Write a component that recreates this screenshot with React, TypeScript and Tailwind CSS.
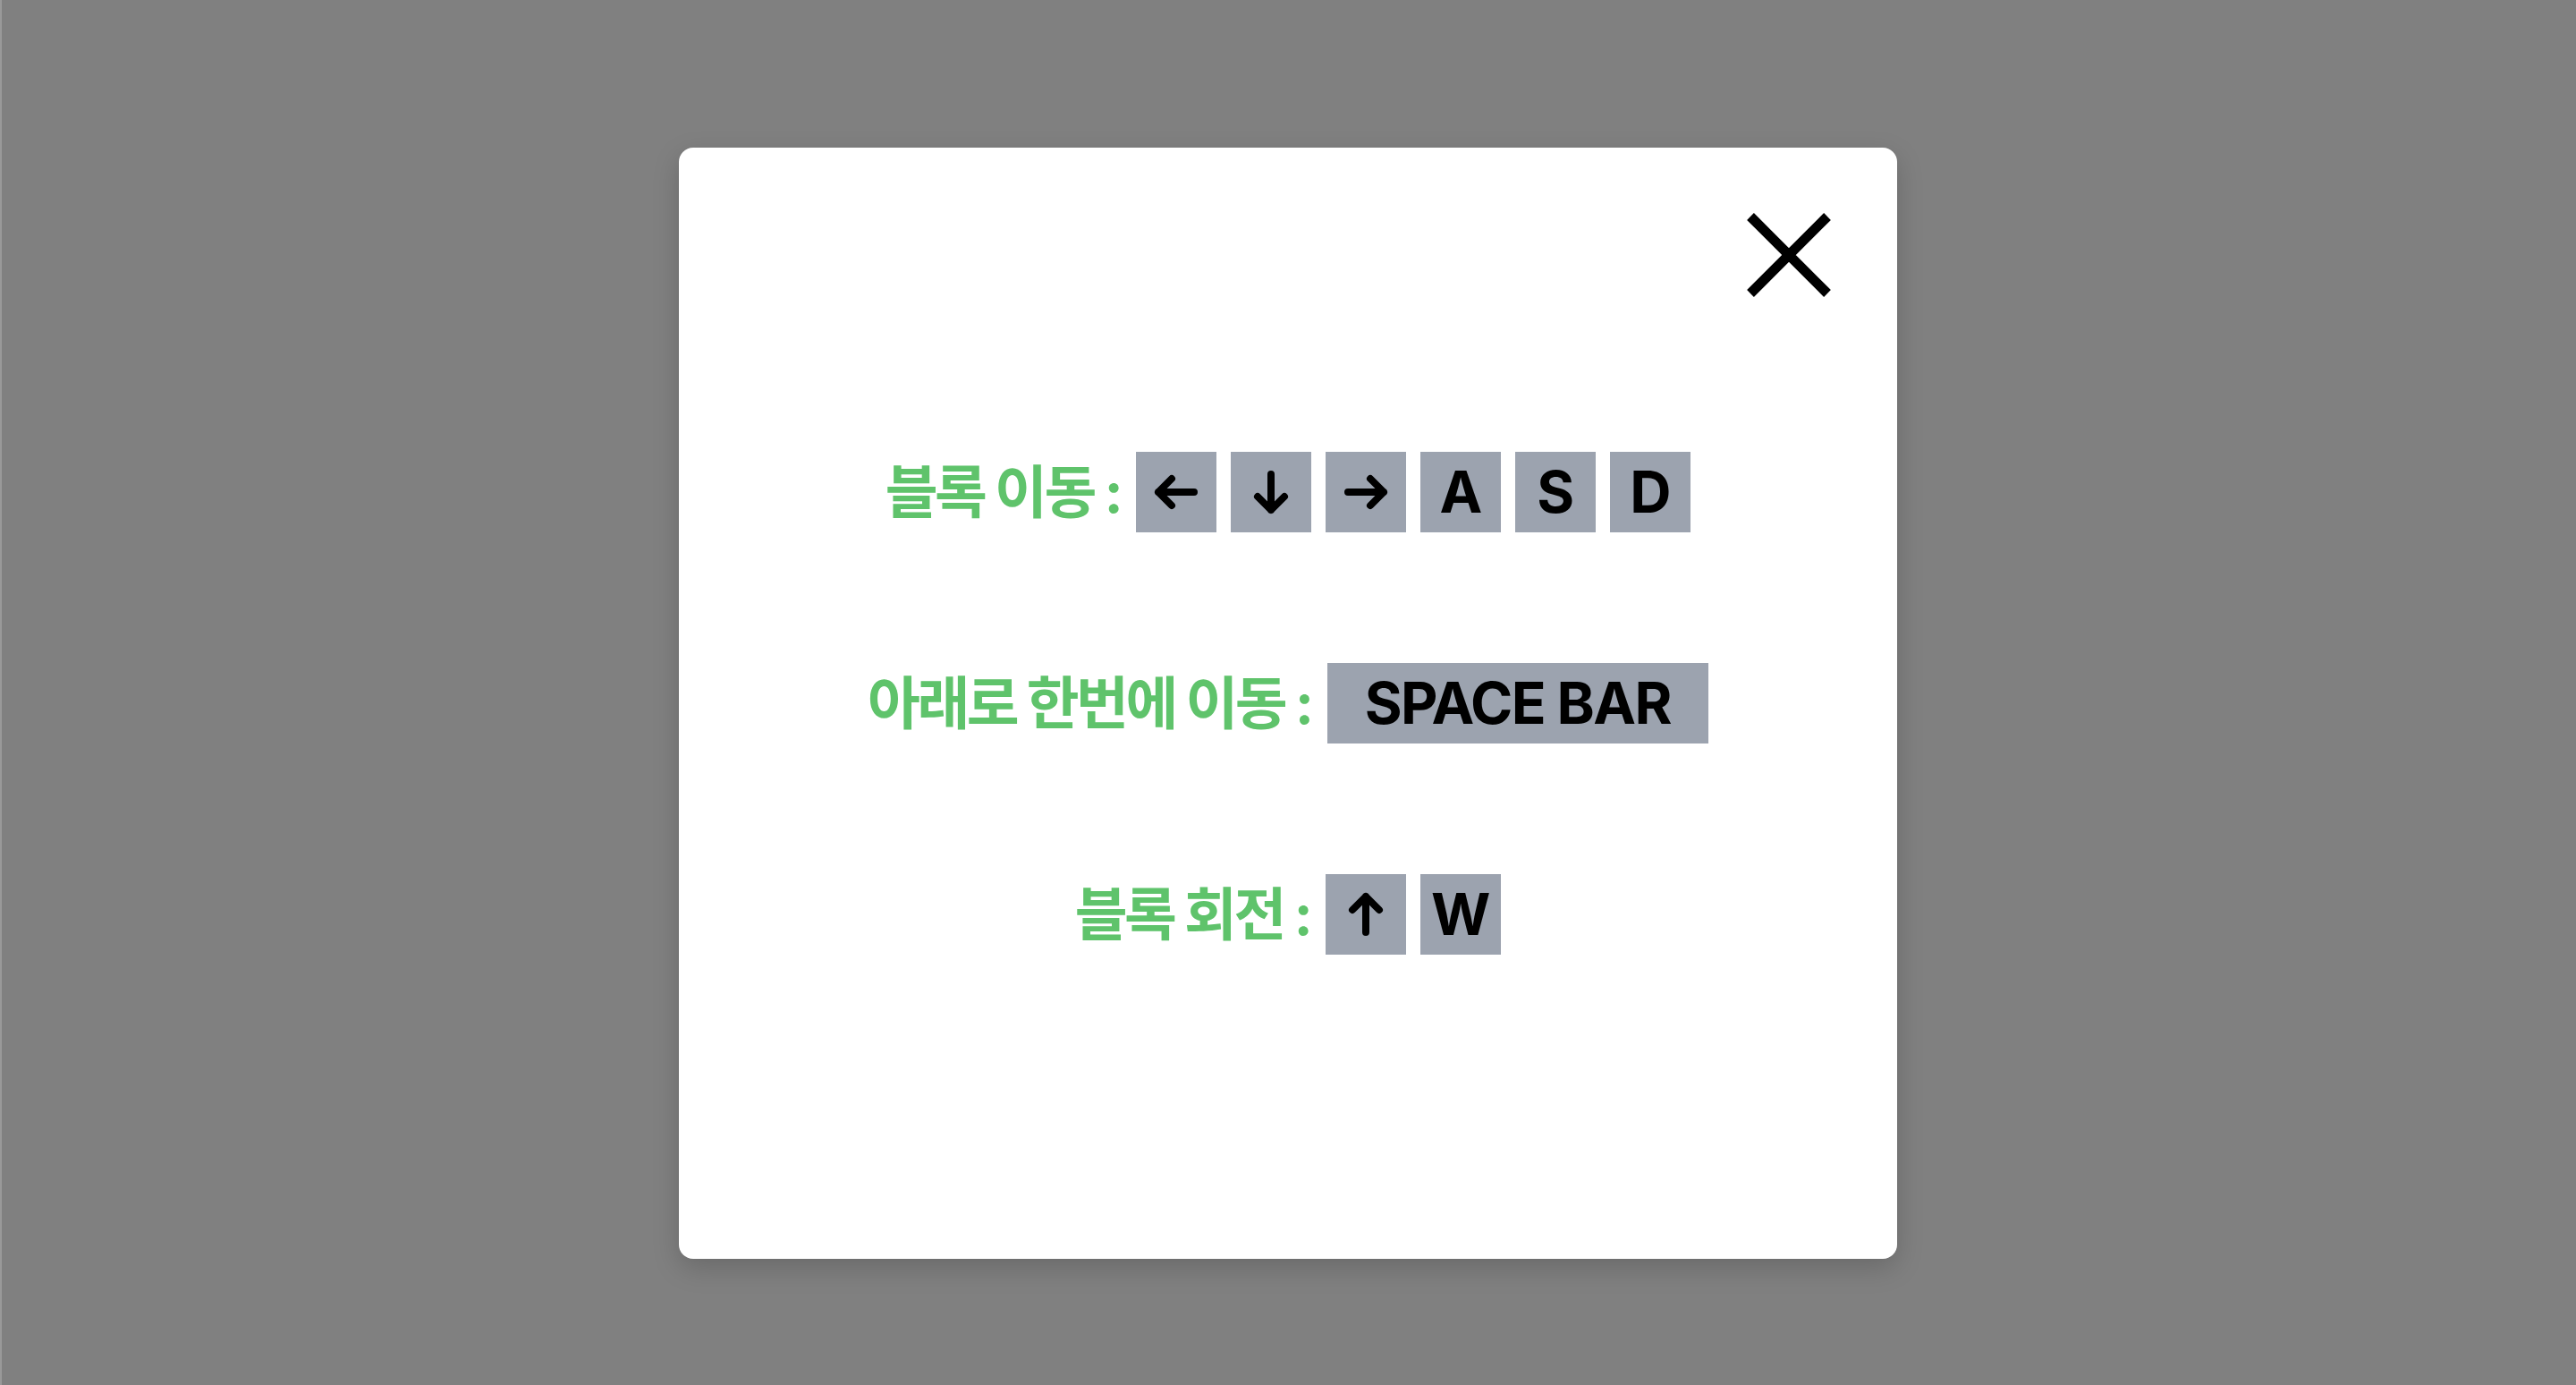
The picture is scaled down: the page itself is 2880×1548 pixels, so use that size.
import React from "react";

const FONT = { fontFamily: 'Inter, "Noto Sans CJK KR", "Noto Sans", sans-serif' };

function Arrow({ d }: { d: string }) {
  return (
    <svg width="90" height="90" viewBox="0 0 90 90" fill="none">
      <path d={d} stroke="#000" strokeWidth="8" strokeLinecap="round" strokeLinejoin="round" />
    </svg>
  );
}

function Key({ children }: { children: React.ReactNode }) {
  return (
    <div className="flex h-[90px] w-[90px] items-center justify-center bg-[#9ca3af] text-[64px] font-bold leading-none text-black">
      {children}
    </div>
  );
}

function Label({ children }: { children: React.ReactNode }) {
  return (
    <span className="mr-[2px] text-[64px] font-bold leading-none tracking-[-0.055em] text-[#5fc36b]">
      {children}
    </span>
  );
}

const LEFT = "M65 45H25M40 30L25 45L40 60";
const RIGHT = "M25 45H65M50 30L65 45L50 60";
const DOWN = "M45 25V65M30 50L45 65L60 50";
const UP = "M45 65V25M30 40L45 25L60 40";

export default function App() {
  return (
    <div
      className="flex min-h-screen w-full items-start justify-center bg-[#808080] pt-[165px] shadow-[inset_2px_0_0_#999999]"
      style={FONT}
    >
      <div className="relative h-[1242px] w-[1362px] rounded-2xl bg-white shadow-[0_10px_30px_rgba(0,0,0,0.18)]">
        <button className="absolute right-[74px] top-[73px] h-[94px] w-[94px]" aria-label="close">
          <svg width="94" height="94" viewBox="0 0 94 94" fill="none">
            <path d="M4 4L90 90M90 4L4 90" stroke="#000" strokeWidth="11" strokeLinecap="butt" />
          </svg>
        </button>
        <div className="flex h-full flex-col items-center justify-center gap-[146px]">
          <div className="flex items-center gap-4">
            <Label>블록 이동 :</Label>
            <Key><Arrow d={LEFT} /></Key>
            <Key><Arrow d={DOWN} /></Key>
            <Key><Arrow d={RIGHT} /></Key>
            <Key>A</Key>
            <Key>S</Key>
            <Key>D</Key>
          </div>
          <div className="flex items-center gap-4">
            <Label>아래로 한번에 이동 :</Label>
            <div className="flex h-[90px] items-center bg-[#9ca3af] px-[42px] text-[64px] font-bold leading-none tracking-[-0.025em] text-black">
              SPACE BAR
            </div>
          </div>
          <div className="flex items-center gap-4">
            <Label>블록 회전 :</Label>
            <Key><Arrow d={UP} /></Key>
            <Key>W</Key>
          </div>
        </div>
      </div>
    </div>
  );
}
